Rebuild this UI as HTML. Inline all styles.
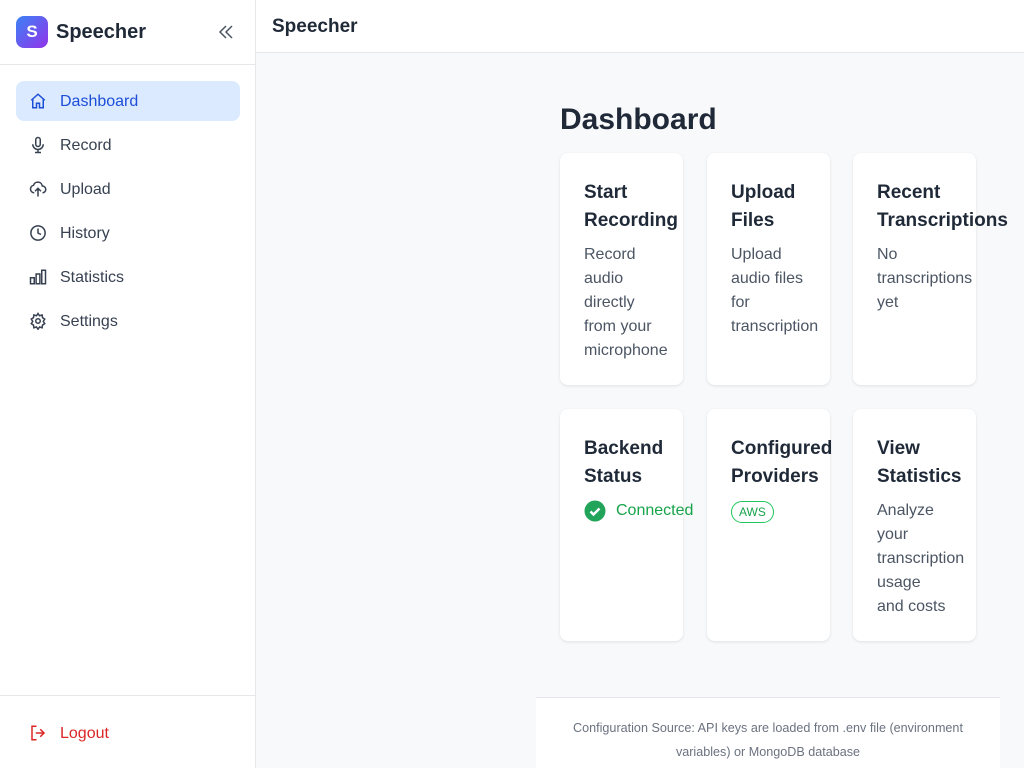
<!DOCTYPE html>
<html><head><style>
*{box-sizing:border-box;margin:0;padding:0}
body{width:1024px;height:768px;overflow:hidden;font-family:"Liberation Sans",sans-serif;background:#f8f9fb;position:relative;color:#1f2937}
.side{position:absolute;left:0;top:0;width:256px;height:768px;background:#fff;border-right:1px solid #e5e7eb}
.logo{height:65px;border-bottom:1px solid #e5e7eb;position:relative}
.lg{position:absolute;left:16px;top:16px;width:32px;height:32px;border-radius:8px;background:linear-gradient(135deg,#3b82f6,#9333ea);color:#fff;font-weight:bold;font-size:17px;text-align:center;line-height:32px}
.lt{position:absolute;left:56px;top:21px;font-size:20px;font-weight:bold;color:#1f2937}
.col{position:absolute;left:216px;top:22px}
.nav{position:absolute;left:16px;width:224px;height:40px;border-radius:8px;font-size:16px;color:#374151;line-height:42px;padding-left:44px}
.nav svg{position:absolute;left:13px;top:11px}
.act{background:#dbeafe;color:#1d4ed8}
.lo{position:absolute;left:0;top:695px;width:255px;border-top:1px solid #e5e7eb;height:73px}
.top{position:absolute;left:256px;top:0;width:768px;height:53px;background:#fff;border-bottom:1px solid #e5e7eb}
.top span{position:absolute;left:16px;top:16px;font-size:19px;font-weight:bold;color:#1f2937}
h1{position:absolute;left:560px;top:103px;font-size:30px;font-weight:bold;color:#1f2937}
.card{position:absolute;width:123px;height:232px;background:#fff;border-radius:8px;box-shadow:0 1px 3px rgba(0,0,0,.1);padding:26px 0 0 24px;white-space:nowrap}
.card h3{font-size:19px;font-weight:bold;line-height:28px;color:#1f2937;margin-bottom:8px}
.card p{font-size:16px;line-height:24px;color:#4b5563}
.foot{position:absolute;left:536px;top:697px;width:464px;height:71px;background:#fff;border-top:1px solid #e5e7eb;text-align:center;font-size:12.6px;line-height:24px;color:#6b7280;padding:18px 20px 0}
</style></head><body>
<div class="side">
<div class="logo"><div class="lg">S</div><div class="lt">Speecher</div>
<svg class="col" width="20" height="20" viewBox="0 0 20 20" fill="none" stroke="#4b5563" stroke-width="1.5"><path d="M10 4l-6 6 6 6M16 4l-6 6 6 6"/></svg></div>
<div class="nav act" style="top:81px"><svg width="18" height="18" viewBox="0 0 24 24" fill="none" stroke="#1d4ed8" stroke-width="2"><path d="M3 11l9-8 9 8M5 9v12h5v-6h4v6h5V9"/></svg>Dashboard</div>
<div class="nav" style="top:125px"><svg width="18" height="18" viewBox="0 0 24 24" fill="none" stroke="#374151" stroke-width="2"><rect x="9" y="2" width="6" height="12" rx="3"/><path d="M5 11a7 7 0 0014 0M12 18v4M8 22h8"/></svg>Record</div>
<div class="nav" style="top:169px"><svg width="18" height="18" viewBox="0 0 24 24" fill="none" stroke="#374151" stroke-width="2"><path d="M7 17a5 5 0 01-1-9.9A6 6 0 0117.7 8 4.5 4.5 0 0118 17M12 11v11M8 15l4-4 4 4"/></svg>Upload</div>
<div class="nav" style="top:213px"><svg width="18" height="18" viewBox="0 0 24 24" fill="none" stroke="#374151" stroke-width="2"><circle cx="12" cy="12" r="9.5"/><path d="M12 6v6l4 2"/></svg>History</div>
<div class="nav" style="top:257px"><svg width="18" height="18" viewBox="0 0 24 24" fill="none" stroke="#374151" stroke-width="2"><rect x="2" y="13" width="5" height="8"/><rect x="9.5" y="8" width="5" height="13"/><rect x="17" y="3" width="5" height="18"/></svg>Statistics</div>
<div class="nav" style="top:301px"><svg width="18" height="18" viewBox="0 0 24 24" fill="none" stroke="#374151" stroke-width="2"><circle cx="12" cy="12" r="3"/><path d="M12 2l2 3 3.5-1 .5 3.5 3 2-2 3 2 3-3 2-.5 3.5-3.5-1-2 3-2-3-3.5 1-.5-3.5-3-2 2-3-2-3 3-2 .5-3.5 3.5 1z"/></svg>Settings</div>
<div class="lo"><div class="nav" style="top:17px;color:#dc2626"><svg width="18" height="18" viewBox="0 0 24 24" fill="none" stroke="#dc2626" stroke-width="2"><path d="M10 3H4v18h6M15 7l5 5-5 5M20 12H9"/></svg>Logout</div></div>
</div>
<div class="top"><span>Speecher</span></div>
<h1>Dashboard</h1>
<div class="card" style="left:560px;top:153px"><h3>Start<br>Recording</h3><p>Record<br>audio<br>directly<br>from your<br>microphone</p></div>
<div class="card" style="left:707px;top:153px"><h3>Upload<br>Files</h3><p>Upload<br>audio files<br>for<br>transcription</p></div>
<div class="card" style="left:853px;top:153px"><h3>Recent<br>Transcriptions</h3><p>No<br>transcriptions<br>yet</p></div>
<div class="card" style="left:560px;top:409px"><h3>Backend<br>Status</h3><p style="color:#16a34a;position:relative;padding-left:32px"><svg style="position:absolute;left:0;top:1px" width="22" height="22" viewBox="0 0 22 22"><circle cx="11" cy="11" r="10.5" fill="#22a55a"/><path d="M6.5 11.5l3 3 6-6" stroke="#fff" stroke-width="2.5" fill="none"/></svg>Connected</p></div>
<div class="card" style="left:707px;top:409px"><h3>Configured<br>Providers</h3><p><span style="display:inline-block;border:1px solid #22c55e;border-radius:12px;color:#16a34a;font-size:12px;line-height:20px;padding:0 7px;margin-top:2px">AWS</span></p></div>
<div class="card" style="left:853px;top:409px"><h3>View<br>Statistics</h3><p>Analyze<br>your<br>transcription<br>usage<br>and costs</p></div>
<div class="foot">Configuration Source: API keys are loaded from .env file (environment variables) or MongoDB database</div>
</body></html>
